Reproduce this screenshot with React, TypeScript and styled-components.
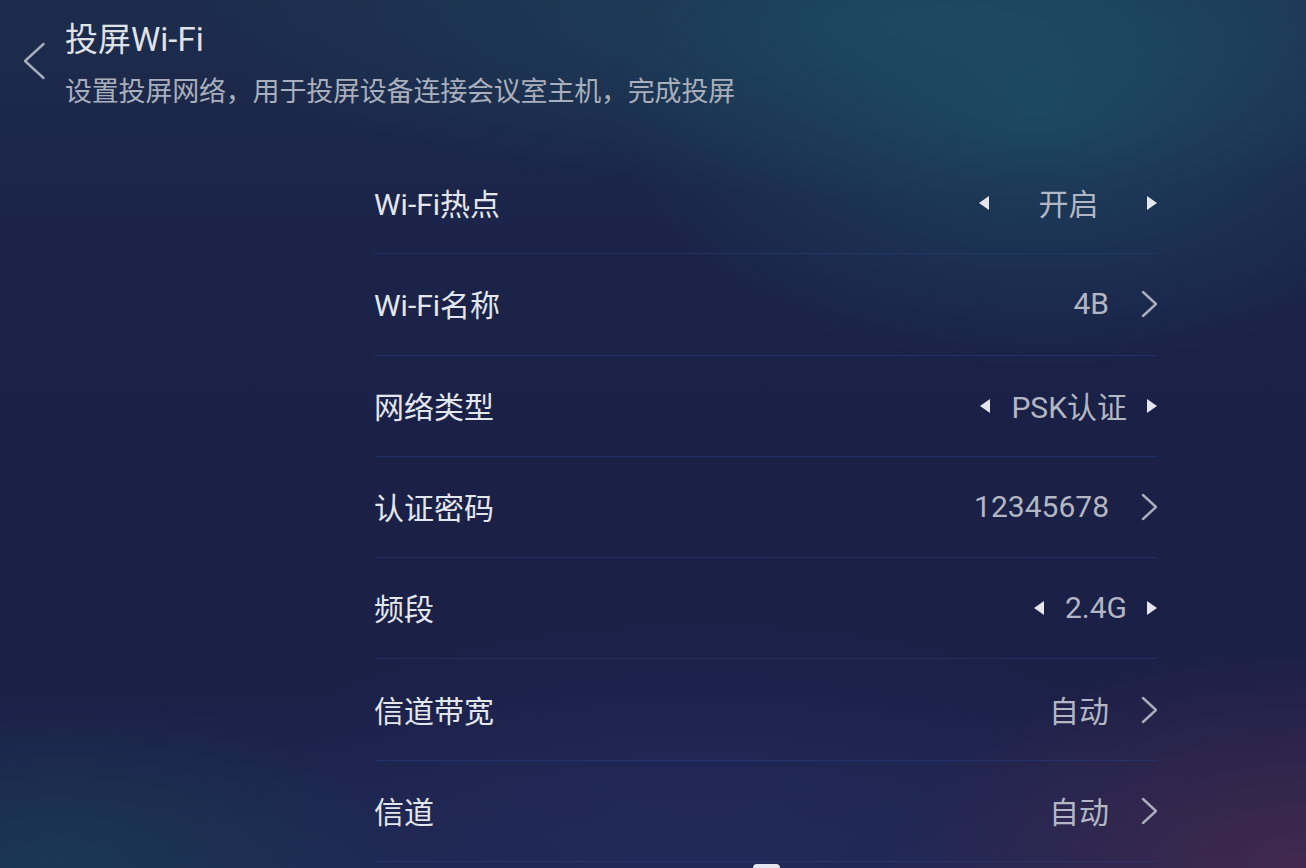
import React from 'react';
import styled, { createGlobalStyle } from 'styled-components';

const GlobalStyle = createGlobalStyle`
  html, body {
    margin: 0;
    padding: 0;
  }
  body {
    font-family: Roboto, "Noto Sans CJK SC", "Noto Sans", sans-serif;
    background: #1a2046;
  }
`;

const Screen = styled.div`
  position: relative;
  width: 1306px;
  height: 868px;
  overflow: hidden;
  box-sizing: border-box;
  padding: 20px 0 0 22px;
  background:
    radial-gradient(ellipse 420px 260px at 1040px 110px, rgba(30, 90, 110, 0.55), rgba(30, 90, 110, 0) 100%),
    radial-gradient(ellipse 700px 180px at 900px 20px, rgba(28, 80, 100, 0.6), rgba(28, 80, 100, 0) 100%),
    radial-gradient(ellipse 420px 220px at 1306px 868px, rgba(72, 40, 78, 0.85), rgba(72, 40, 78, 0) 100%),
    radial-gradient(ellipse 360px 160px at 60px 860px, rgba(24, 68, 88, 0.55), rgba(24, 68, 88, 0) 100%),
    radial-gradient(ellipse 500px 200px at 700px 820px, rgba(36, 44, 96, 0.6), rgba(36, 44, 96, 0) 100%),
    linear-gradient(180deg, #1d2c4c 0%, #1b2549 22%, #1a2046 50%, #1b2047 80%, #1e2750 100%);
`;

const Header = styled.header`
  display: flex;
  align-items: flex-start;
  gap: 19px;
`;

const BackButton = styled.button`
  width: 24px;
  height: 40px;
  margin-top: 21px;
  padding: 0;
  border: none;
  background: none;
  display: flex;
  cursor: pointer;
`;

const TitleBlock = styled.div`
  display: flex;
  flex-direction: column;
  gap: 14px;
`;

const Title = styled.h1`
  margin: 0;
  font-size: 33px;
  line-height: 40px;
  font-weight: 400;
  color: #dfe2e8;
`;

const Subtitle = styled.div`
  font-size: 27px;
  line-height: 36px;
  color: #a9afbc;
  letter-spacing: -0.2px;
`;

const List = styled.ul`
  list-style: none;
  margin: 43px 0 0 352px;
  padding: 0;
  width: 783px;
`;

const Row = styled.li`
  box-sizing: border-box;
  height: 101.3px;
  display: flex;
  align-items: center;
  justify-content: space-between;
  border-bottom: 1px solid rgba(40, 74, 150, 0.38);
`;

const Label = styled.span`
  font-size: 30px;
  color: #e3e6ec;
  margin-top: -2px;
`;

const ValueGroup = styled.div`
  display: flex;
  align-items: center;
`;

const Value = styled.span<{ $minWidth?: number }>`
  font-size: 30px;
  color: #b3b7c4;
  text-align: center;
  min-width: ${(p) => (p.$minWidth ? `${p.$minWidth}px` : 'auto')};
  margin-top: -2px;
`;

const Arrow = styled.span<{ $dir: 'left' | 'right' }>`
  width: 0;
  height: 0;
  border-top: 7px solid transparent;
  border-bottom: 7px solid transparent;
  ${(p) =>
    p.$dir === 'left'
      ? 'border-right: 10px solid #e4e6ec; margin-right: 21px;'
      : 'border-left: 10px solid #e4e6ec; margin-left: 20px;'}
`;

const Chevron = styled.svg`
  width: 17px;
  height: 28px;
  margin-left: 31px;
`;

const HomeIndicator = styled.div`
  position: absolute;
  left: 753px;
  bottom: -6px;
  width: 27px;
  height: 10px;
  border-radius: 4px;
  background: #e6e7ee;
`;

type Item =
  | { label: string; kind: 'select'; value: string; minWidth?: number }
  | { label: string; kind: 'link'; value: string };

const items: Item[] = [
  { label: 'Wi-Fi热点', kind: 'select', value: '开启', minWidth: 117 },
  { label: 'Wi-Fi名称', kind: 'link', value: '4B' },
  { label: '网络类型', kind: 'select', value: 'PSK认证' },
  { label: '认证密码', kind: 'link', value: '12345678' },
  { label: '频段', kind: 'select', value: '2.4G' },
  { label: '信道带宽', kind: 'link', value: '自动' },
  { label: '信道', kind: 'link', value: '自动' },
];

const App: React.FC = () => {
  return (
    <>
      <GlobalStyle />
      <Screen>
        <Header>
          <BackButton aria-label="返回">
            <svg width="24" height="40" viewBox="0 0 24 40">
              <polyline
                points="21.5,3 3,20 21.5,37"
                fill="none"
                stroke="#a6acba"
                strokeWidth="2.4"
                strokeLinecap="round"
                strokeLinejoin="round"
              />
            </svg>
          </BackButton>
          <TitleBlock>
            <Title>投屏Wi-Fi</Title>
            <Subtitle>设置投屏网络，用于投屏设备连接会议室主机，完成投屏</Subtitle>
          </TitleBlock>
        </Header>
        <List>
          {items.map((item) => (
            <Row key={item.label}>
              <Label>{item.label}</Label>
              {item.kind === 'select' ? (
                <ValueGroup>
                  <Arrow $dir="left" />
                  <Value $minWidth={item.minWidth}>{item.value}</Value>
                  <Arrow $dir="right" />
                </ValueGroup>
              ) : (
                <ValueGroup>
                  <Value>{item.value}</Value>
                  <Chevron viewBox="0 0 17 28">
                    <polyline
                      points="3,2 16,14 3,26"
                      fill="none"
                      stroke="#a9adbb"
                      strokeWidth="2.4"
                      strokeLinecap="round"
                      strokeLinejoin="round"
                    />
                  </Chevron>
                </ValueGroup>
              )}
            </Row>
          ))}
        </List>
        <HomeIndicator />
      </Screen>
    </>
  );
};

export default App;
